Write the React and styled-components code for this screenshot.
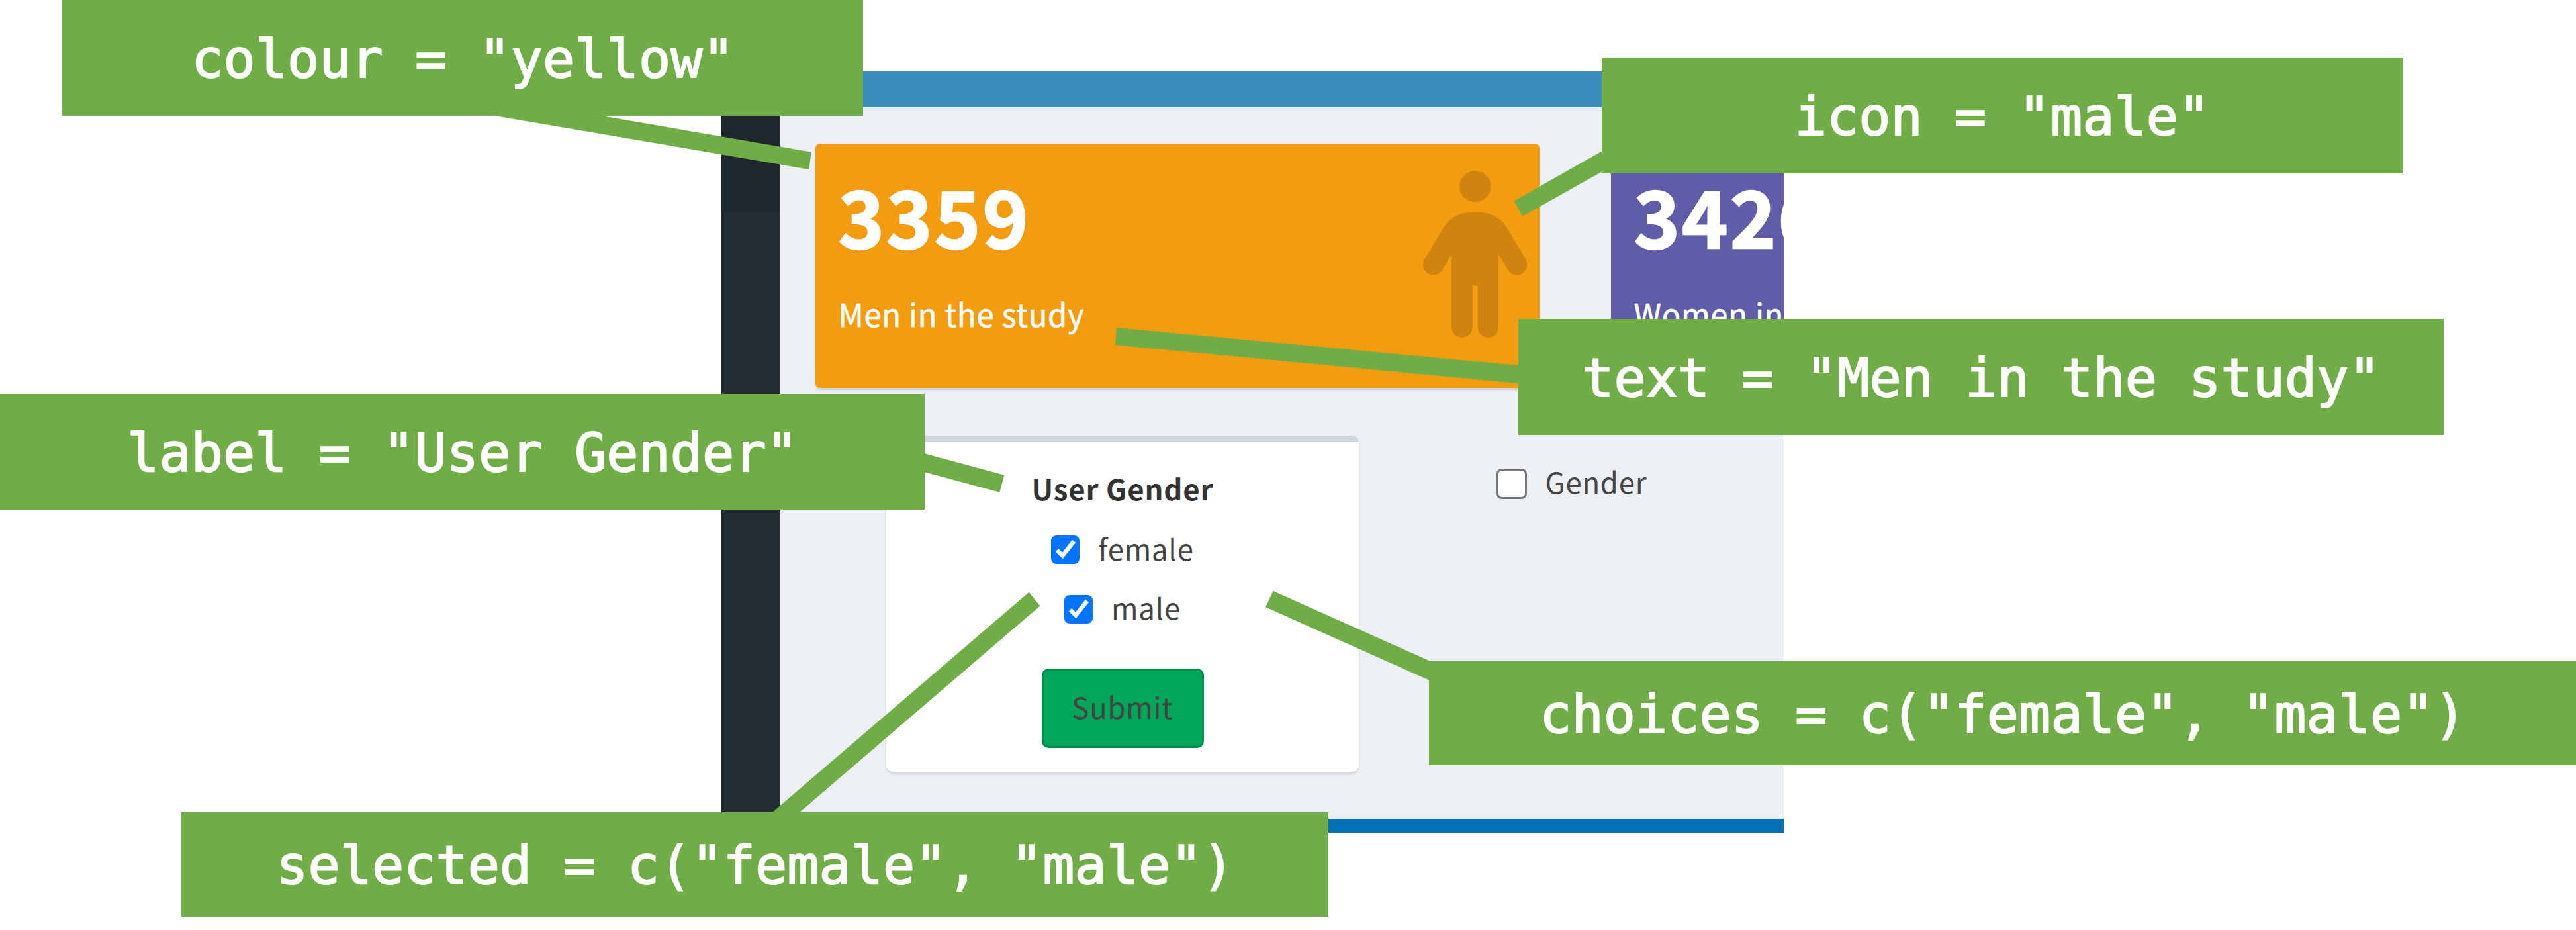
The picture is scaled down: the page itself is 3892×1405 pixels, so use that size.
import React from "react";
import styled, { createGlobalStyle } from "styled-components";

const GlobalStyle = createGlobalStyle`
  * { box-sizing: border-box; }
  html, body { margin: 0; padding: 0; background: #fff; }
  body { overflow: hidden; }
`;

const Canvas = styled.main`
  position: relative;
  width: 3892px;
  height: 1405px;
  padding: 108px 0 0 1090px;
  overflow: hidden;
  background: #fff;
  font-family: "Noto Sans CJK SC", "Noto Sans", sans-serif;
  font-size: 43.7px;
  color: #444;
`;

const Dashboard = styled.section`
  display: flex;
  flex-direction: column;
  width: 1605px;
  height: 1150px;
  overflow: hidden;
  background: #ecf0f5;
`;

const Navbar = styled.header`
  flex: 0 0 54px;
  background: #3c8dbc;
`;

const Body = styled.div`
  display: flex;
  flex: 1;
  min-height: 0;
`;

const Sidebar = styled.aside`
  flex: 0 0 89px;
  background: #222d32;
`;

const SidebarItem = styled.div`
  height: 157.5px;
  background: #1e282c;
`;

const Content = styled.div`
  flex: 1;
  min-width: 0;
  padding: 55px 0 0 52.5px;
`;

const CardRow = styled.div`
  display: flex;
  gap: 108px;
`;

const ValueCard = styled.article`
  display: flex;
  justify-content: space-between;
  flex: 0 0 1094px;
  height: 369px;
  padding: 32px 18.5px 0 35px;
  border-radius: 7px;
  background: ${(p) => p.$color};
  box-shadow: 0 3.5px 3.5px rgba(0, 0, 0, 0.1);
  color: #fff;
  white-space: nowrap;
`;

const Value = styled.h3`
  margin: 0 0 41px;
  font-size: 118px;
  line-height: 150px;
  font-weight: 700;
  letter-spacing: 3px;
  -webkit-text-stroke: 2.5px currentColor;
`;

const Caption = styled.p`
  margin: 0;
  font-size: 47.2px;
  line-height: 68px;
  letter-spacing: 0.7px;
  -webkit-text-stroke: 0.6px currentColor;
`;

const PersonIcon = styled.svg`
  width: 157.5px;
  height: 252px;
  margin-top: 8.5px;
  fill: rgba(0, 0, 0, 0.15);
`;

const FormRow = styled.div`
  display: flex;
  align-items: flex-start;
  padding: 71.5px 0 0 107.5px;
`;

const FormBox = styled.div`
  display: flex;
  flex-direction: column;
  align-items: center;
  width: 714px;
  height: 508.5px;
  padding-top: 39px;
  border-top: 10px solid #d2d6de;
  border-radius: 10px;
  background: #fff;
  box-shadow: 0 3.5px 3.5px rgba(0, 0, 0, 0.1);
`;

const GroupLabel = styled.div`
  margin-bottom: 31.5px;
  font-weight: 700;
  line-height: 60px;
  color: #333;
  letter-spacing: 0.85px;
`;

const Option = styled.label`
  display: flex;
  align-items: center;
  gap: 28px;
  height: 60px;
  margin-top: ${(p) => p.$top || 0}px;
  margin-left: ${(p) => p.$left || 0}px;
  line-height: 60px;
  letter-spacing: 0.8px;
`;

const Check = styled.span`
  display: flex;
  align-items: center;
  justify-content: center;
  width: ${(p) => (p.$on ? 43 : 46)}px;
  height: ${(p) => (p.$on ? 43 : 46)}px;
  margin-top: ${(p) => p.$drop || 0}px;
  border: ${(p) => (p.$on ? "none" : "3.5px solid #767676")};
  border-radius: 8px;
  background: ${(p) => (p.$on ? "#0075ff" : "#fff")};
`;

const SubmitButton = styled.button`
  width: 245px;
  height: 120px;
  margin-top: 63px;
  padding: 0 0 6px;
  border: 3px solid #008d4c;
  border-radius: 10px;
  background: #00a65a;
  color: #444;
  font: inherit;
  line-height: 60px;
  letter-spacing: 0.8px;
`;

const Footer = styled.footer`
  flex: 0 0 21px;
  background: #0073b7;
`;

const Pointers = styled.svg`
  position: absolute;
  inset: 0;
  fill: #70ad47;
`;

const Callout = styled.div`
  position: absolute;
  left: ${(p) => p.$x}px;
  top: ${(p) => p.$y}px;
  display: flex;
  align-items: center;
  justify-content: center;
  width: ${(p) => p.$w}px;
  height: ${(p) => p.$h}px;
  padding: 3px 0 0 1px;
  background: #70ad47;
  color: #fff;
  font: 80px "DejaVu Sans Mono", monospace;
  letter-spacing: 0.09px;
  -webkit-text-stroke: 2px currentColor;
  white-space: pre;
`;

const callouts = [
  { x: 94, y: 0, w: 1210, h: 175, text: 'colour = "yellow"' },
  { x: 2420, y: 87, w: 1210, h: 175, text: 'icon = "male"' },
  { x: 2294, y: 482, w: 1398, h: 175, text: 'text = "Men in the study"' },
  { x: 0, y: 595, w: 1397, h: 175, text: 'label = "User Gender"' },
  { x: 2159, y: 999, w: 1733, h: 157, text: 'choices = c("female", "male")' },
  { x: 274, y: 1227, w: 1733, h: 158, text: 'selected = c("female", "male")' },
];

const pointers = [
  "742,174 903,174 1225.7,229.7 1222.3,256",
  "2421,228 2287.6,303.4 2300.3,326.7 2421,259",
  "1686.8,495 1685,521.2 2295,579.3 2295,552.1",
  "1396,685 1517.3,717.7 1510.3,743.7 1396,713",
  "1923.5,892.8 1912.2,917.3 2160,1028 2160,998.6",
  "1554.6,894.7 1571.4,915.4 1207,1228 1166,1228",
];

function Tick() {
  return (
    <svg width="31" height="31" viewBox="0 0 31 31" fill="none">
      <path d="M3 16.3 L11.3 24.5 L28.5 2.8" stroke="#fff" strokeWidth="6.5" />
    </svg>
  );
}

function Person() {
  return (
    <PersonIcon viewBox="0 0 320 512">
      <path d="M112 48a48 48 0 1 1 96 0A48 48 0 1 1 112 48zm40 304V480c0 17.7-14.3 32-32 32s-32-14.3-32-32V256.9L59.4 304.5c-9.1 15.1-28.8 20-43.9 10.9s-20-28.8-10.9-43.9l58.3-97c17.4-28.9 48.6-46.6 82.3-46.6h29.7c33.7 0 64.9 17.7 82.3 46.6l58.3 97c9.1 15.1 4.2 34.8-10.9 43.9s-34.8 4.2-43.9-10.9L232 256.9V480c0 17.7-14.3 32-32 32s-32-14.3-32-32V352H152z" />
    </PersonIcon>
  );
}

export default function App() {
  return (
    <Canvas>
      <GlobalStyle />
      <Dashboard>
        <Navbar />
        <Body>
          <Sidebar>
            <SidebarItem />
          </Sidebar>
          <Content>
            <CardRow>
              <ValueCard $color="#f39c12">
                <div>
                  <Value>3359</Value>
                  <Caption>Men in the study</Caption>
                </div>
                <Person />
              </ValueCard>
              <ValueCard $color="#605ca8">
                <div>
                  <Value>3426</Value>
                  <Caption>Women in</Caption>
                </div>
              </ValueCard>
            </CardRow>
            <FormRow>
              <FormBox>
                <GroupLabel>User Gender</GroupLabel>
                <Option>
                  <Check $on $drop={5}><Tick /></Check>
                  female
                </Option>
                <Option $top={29}>
                  <Check $on $drop={7.5}><Tick /></Check>
                  male
                </Option>
                <SubmitButton type="button">Submit</SubmitButton>
              </FormBox>
              <Option $top={39.5} $left={207.5}>
                <Check $drop={8} />
                Gender
              </Option>
            </FormRow>
          </Content>
        </Body>
        <Footer />
      </Dashboard>
      <Pointers width="3892" height="1405" viewBox="0 0 3892 1405">
        {pointers.map((points) => (
          <polygon key={points} points={points} />
        ))}
      </Pointers>
      {callouts.map((c) => (
        <Callout key={c.text} $x={c.x} $y={c.y} $w={c.w} $h={c.h}>
          {c.text}
        </Callout>
      ))}
    </Canvas>
  );
}
